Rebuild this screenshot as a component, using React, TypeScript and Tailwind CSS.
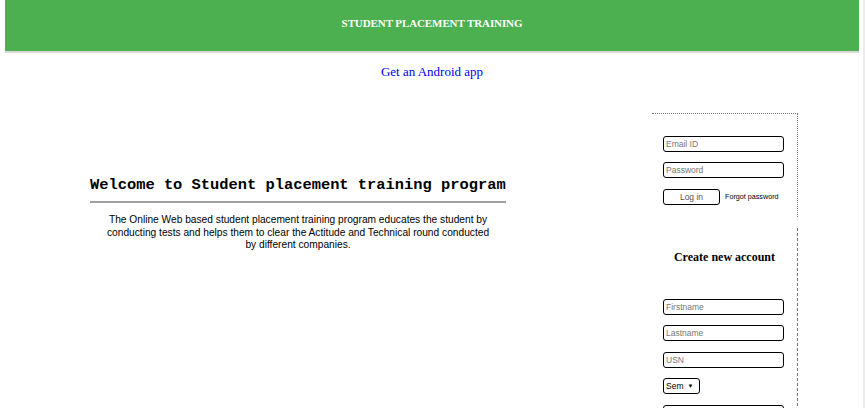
import React from "react";

const inputCls =
  "block w-[121px] h-[16px] rounded-[3px] border border-black bg-white px-[2px] text-[8.5px] leading-none text-black placeholder:text-[#777] outline-none";

function Field({ placeholder, type = "text" }: { placeholder: string; type?: string }) {
  return <input type={type} placeholder={placeholder} className={inputCls} style={{ fontFamily: '"Liberation Sans", Arial, sans-serif' }} />;
}

export default function App() {
  return (
    <div className="flex min-h-[408px] bg-white" style={{ fontFamily: '"Liberation Serif", "Times New Roman", serif' }}>
      <div className="flex-1 pl-[5px] pr-[4px]">
        {/* Header */}
        <header className="h-[53px] bg-[#4CAF50] border-b-2 border-[#d9d9d9] flex items-center justify-center">
          <h1 className="text-[11px] font-bold text-white tracking-[-0.1px] -mt-[4px]">STUDENT PLACEMENT TRAINING</h1>
        </header>

        <div className="flex justify-center mt-[11px]">
          <a href="#" className="text-[13px] text-[#0000ee] leading-[16px]">Get an Android app</a>
        </div>

        <div className="flex mt-[33px]">
          {/* Left content */}
          <div className="w-[647px] pl-[85px] pt-[63px]">
            <div className="w-[416px]">
              <h2
                className="text-[15.4px] font-bold text-black leading-[18px] whitespace-nowrap"
                style={{ fontFamily: '"Liberation Mono", "Courier New", monospace' }}
              >
                Welcome to Student placement training program
              </h2>
              <hr className="mt-[7px] border-t-2 border-[#a0a0a0]" />
              <p
                className="mx-auto mt-[11px] w-[394px] text-center text-[10.2px] leading-[12.5px] text-black"
                style={{ fontFamily: '"Liberation Sans", Arial, sans-serif' }}
              >
                The Online Web based student placement training program educates the student by conducting tests and helps them to clear the Actitude and Technical round conducted by different companies.
              </p>
            </div>
          </div>

          {/* Right panel */}
          <div className="w-[146px]">
            <div className="border-t border-r border-dotted border-[#777] h-[104px] pl-[11px] pt-[22px]">
              <Field placeholder="Email ID" />
              <div className="mt-[10px]">
                <Field placeholder="Password" type="password" />
              </div>
              <div className="mt-[11px] flex items-center">
                <button
                  className="w-[57px] h-[16px] rounded-[3px] border border-black bg-white text-[8.5px] text-[#555] leading-none"
                  style={{ fontFamily: '"Liberation Sans", Arial, sans-serif' }}
                >
                  Log in
                </button>
                <a
                  href="#"
                  className="ml-[5px] text-[7.2px] text-black leading-none"
                  style={{ fontFamily: '"Liberation Sans", Arial, sans-serif' }}
                >
                  Forgot password
                </a>
              </div>
            </div>

            <div className="mt-[11px] border-r border-dashed border-[#777] min-h-[190px] pl-[11px]">
              <h3 className="pt-[22px] text-center pr-[11px] text-[12px] font-bold text-black leading-[14px]">Create new account</h3>
              <div className="mt-[35px]">
                <Field placeholder="Firstname" />
              </div>
              <div className="mt-[10px]">
                <Field placeholder="Lastname" />
              </div>
              <div className="mt-[11px]">
                <Field placeholder="USN" />
              </div>
              <div
                className="mt-[10px] w-[37px] h-[16px] rounded-[3px] border border-black flex items-center px-[2px] text-[8.5px] text-black"
                style={{ fontFamily: '"Liberation Sans", Arial, sans-serif' }}
              >
                <span>Sem</span>
                <span className="ml-[4px] text-[6px]">▼</span>
              </div>
              <div className="mt-[11px]">
                <Field placeholder="" />
              </div>
            </div>
          </div>
        </div>
      </div>
      <div className="w-[2px] bg-[#ececec]" />
    </div>
  );
}
